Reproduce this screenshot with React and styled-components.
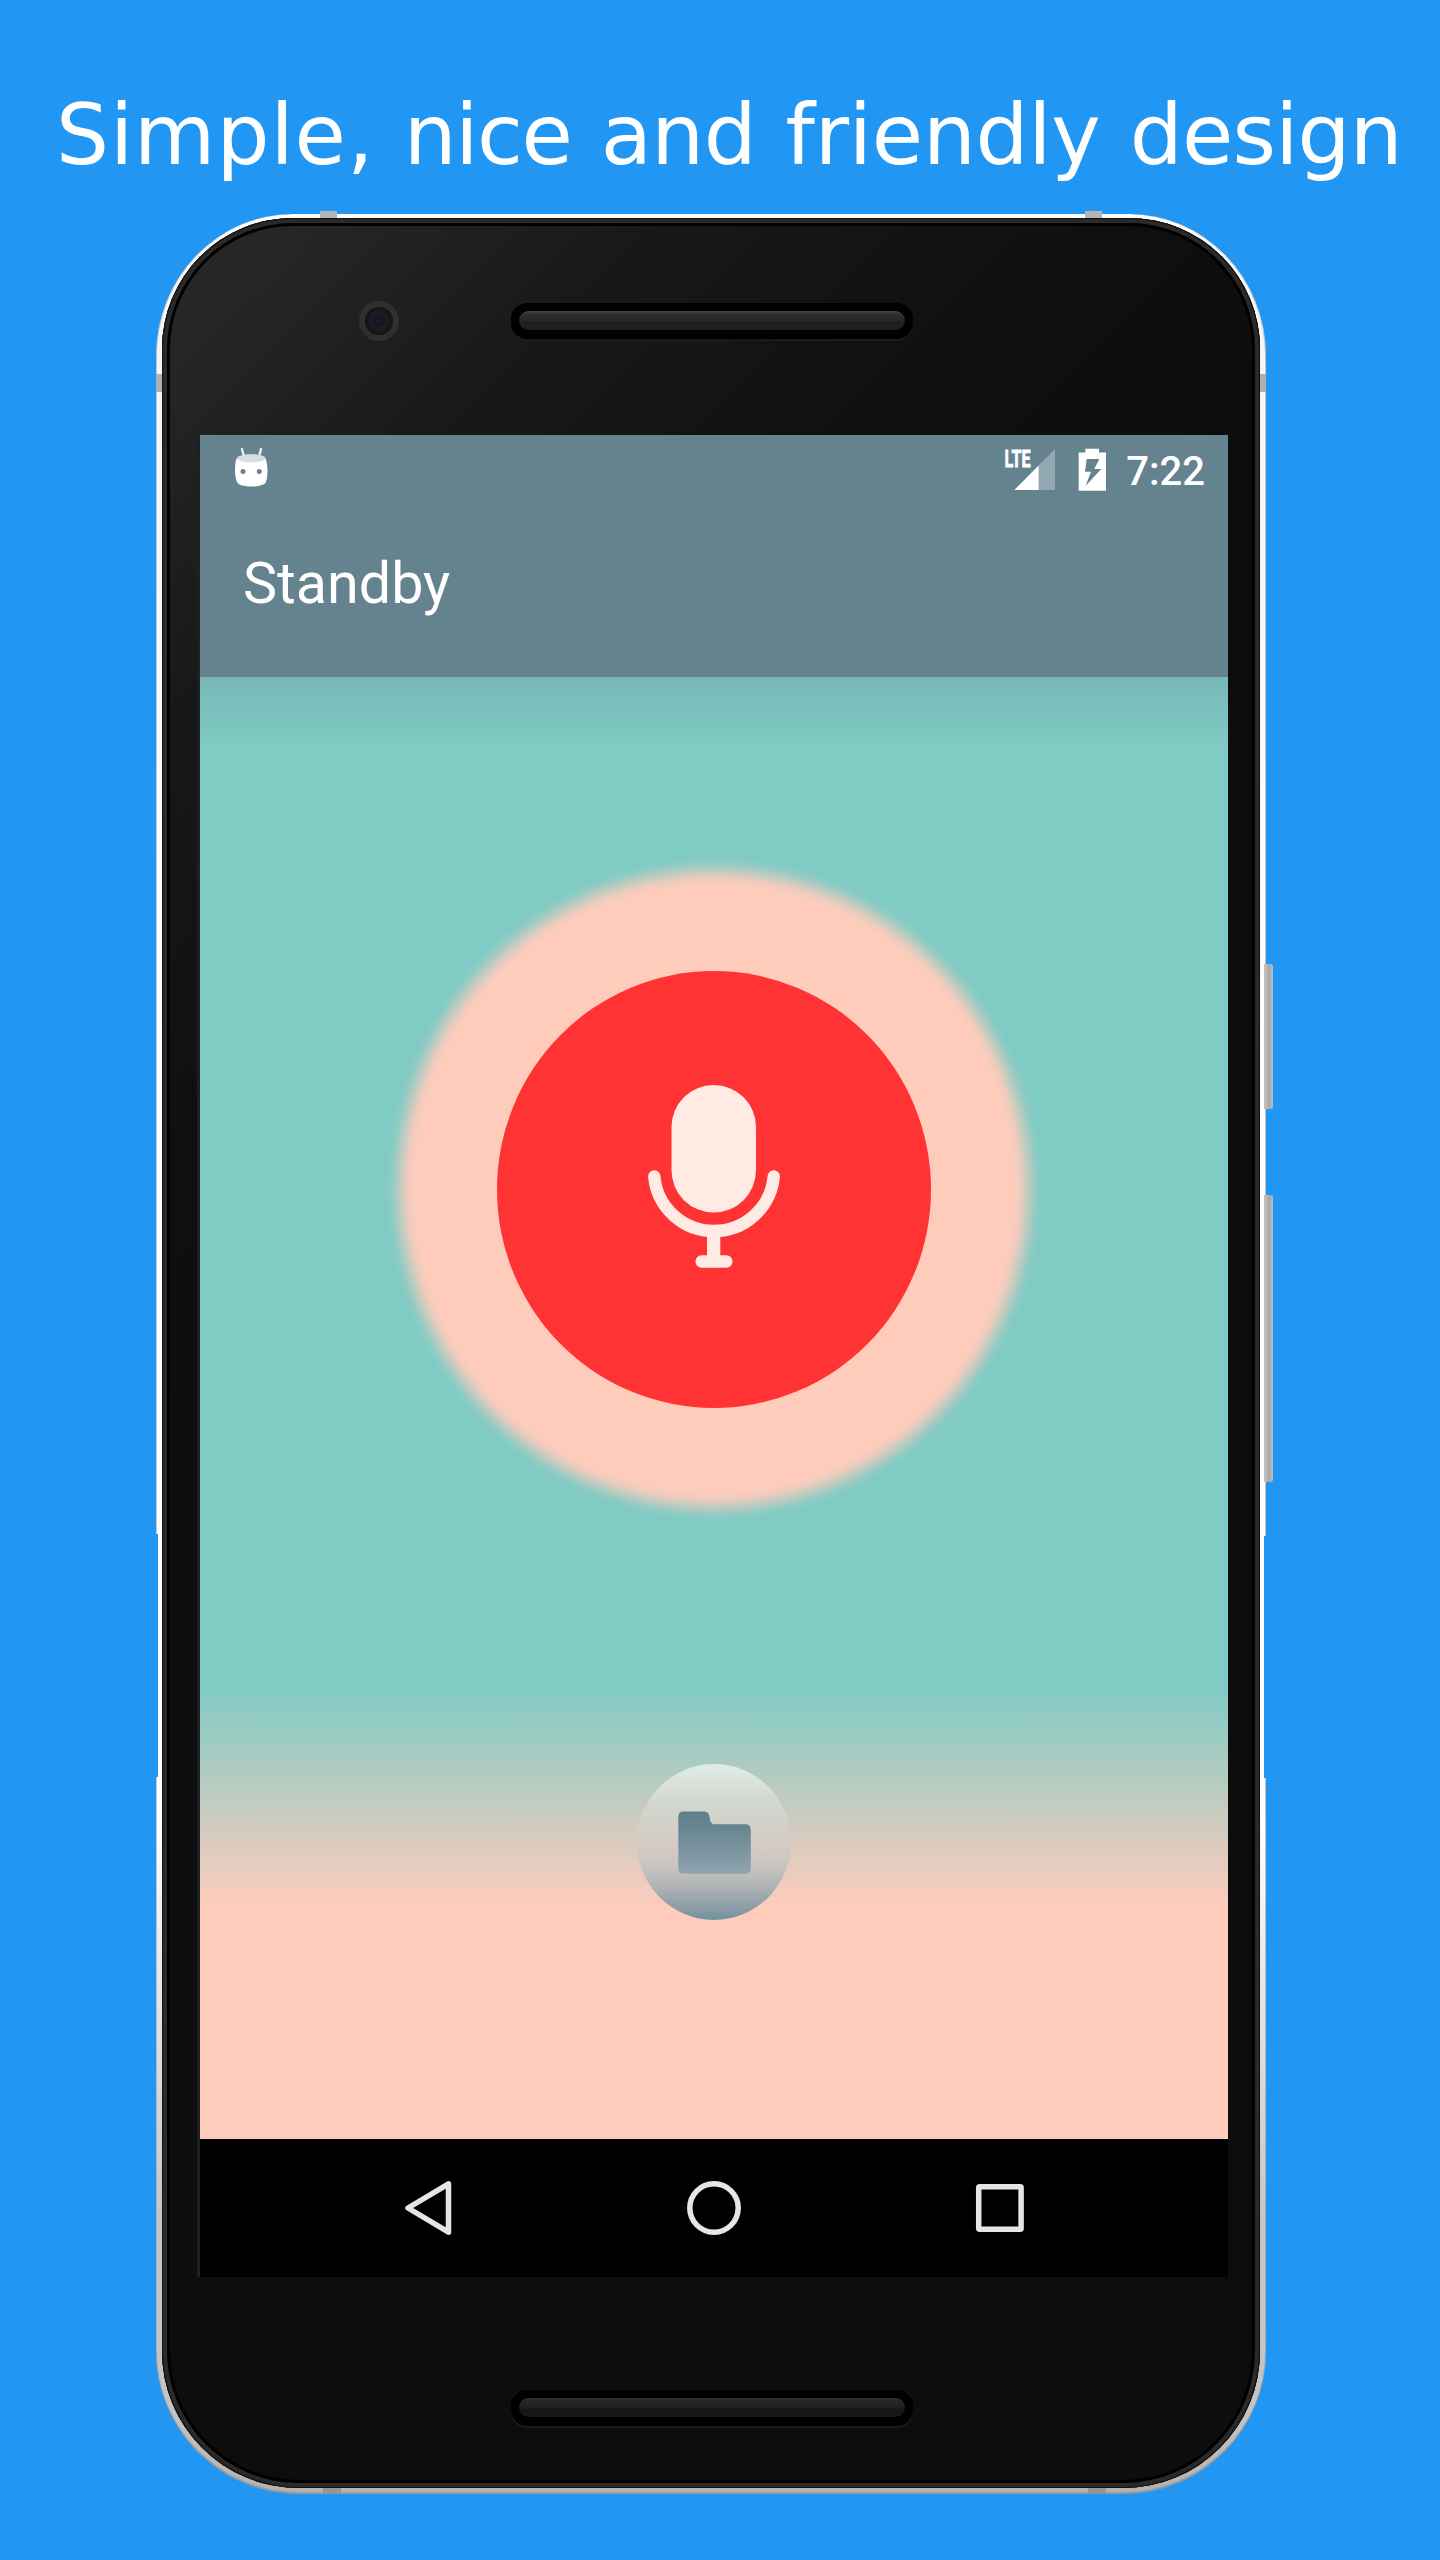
import React from "react";
import styled, { createGlobalStyle } from "styled-components";

const GlobalStyle = createGlobalStyle`
  * { box-sizing: border-box; }
  body { margin: 0; background: #2196f3; }
`;

const Page = styled.main`
  width: 1440px;
  height: 2560px;
  overflow: hidden;
  background: #2196f3;
  display: flex;
  flex-direction: column;
`;

const Title = styled.h1`
  margin: 0;
  height: 214px;
  padding: 86px 0 0 56px;
  font: 400 83.5px/98px "DejaVu Sans", Verdana, sans-serif;
  word-spacing: 0.034em;
  color: #fff;
  white-space: nowrap;
`;

const Word = styled.span`
  letter-spacing: ${(p) => p.$track}em;
`;

const Frame = styled.section`
  position: relative;
  margin-left: 156px;
  width: 1110px;
  height: 2280px;
  padding: 4px 6px 6px 6px;
  border-radius: 137px 137px 143px 143px / 142px 142px 143px 143px;
  box-shadow: inset 1px 0 0 rgba(150, 150, 150, 0.5), inset -1px 0 0 rgba(150, 150, 150, 0.5), inset 0 -2px 0 rgba(120, 120, 120, 0.4);
  background: linear-gradient(180deg, #fff 0, #f4f4f4 150px, #fff 900px, #fff 1600px, #c6c6c6 2000px, #c4c4c4 2200px, #b2b2b2 2280px);
`;

const FrameEdge = styled.span`
  position: absolute;
  top: ${(p) => p.$top}px;
  left: ${(p) => p.$left}px;
  width: ${(p) => p.$width}px;
  height: ${(p) => p.$height}px;
  background: ${(p) => p.$fill};
`;

const SideButton = styled.span`
  position: absolute;
  left: 1108px;
  top: ${(p) => p.$top}px;
  width: 9px;
  height: ${(p) => p.$height}px;
  border-radius: 0 3px 3px 0;
  background: linear-gradient(90deg, #c4c4c4, #a9a9a9 60%, #bdbdbd);
  &::before {
    content: "";
    position: absolute;
    left: 0;
    top: -28px;
    width: 4px;
    height: ${(p) => p.$height + 56}px;
    background: #c0c0c0;
    clip-path: polygon(40% 0, 100% 28px, 100% calc(100% - 28px), 40% 100%, 0 100%, 0 0);
    z-index: -1;
  }
`;

const Body = styled.div`
  position: relative;
  height: 100%;
  border-radius: 131px 131px 137px 137px;
  display: flex;
  flex-direction: column;
  box-shadow: inset 0 0 0 1px #101010, inset 0 0 0 5px #2a2a2a, inset 0 0 0 8px #000;
  background: linear-gradient(135deg, #292929 0, #262626 100px, #181818 360px, #0f0f0f 680px, #0d0d0d 900px);
`;

const TopBezel = styled.div`
  height: 217px;
  padding: 83px 0 94px 197px;
  display: flex;
  align-items: center;
  gap: 112px;
`;

const BottomBezel = styled.div`
  padding: 113px 0 0 349px;
`;

const Camera = styled.div`
  width: 40px;
  height: 40px;
  border: 6px solid #2f2f2f;
  border-radius: 50%;
  background: radial-gradient(circle, #221c31 0, #17141f 4px, #1e1b24 8px, #121116 14px);
`;

const Speaker = styled.div`
  width: 402px;
  height: 36px;
  padding: 8px;
  border-radius: 16px;
  background: #000;
  box-shadow: 0 2px 0 #1b1b1b;
  &::before {
    content: "";
    display: block;
    height: 19px;
    border-radius: 10px;
    background: ${(p) =>
      p.$dim
        ? "linear-gradient(#333 0, #232323 4px, #1f1f1f 10px, #171717 11px, #171717)"
        : "linear-gradient(#444 0, #2c2c2c 4px, #282828 10px, #1f1f1f 11px, #1f1f1f)"};
  }
`;

const Screen = styled.div`
  margin-left: 38px;
  width: 1028px;
  height: 1842px;
  flex: none;
  display: flex;
  flex-direction: column;
  box-shadow: -3px 0 0 #1b2028;
`;

const Header = styled.header`
  height: 242px;
  flex: none;
  background: #64838f;
  color: #fff;
  font-family: Roboto, sans-serif;
`;

const StatusBar = styled.div`
  height: 72px;
  padding: 0 23px 0 34px;
  display: flex;
  align-items: center;
`;

const Clock = styled.span`
  margin: 2px 0 0 20px;
  font-size: 40px;
  font-weight: 500;
  line-height: 48px;
`;

const StatusIcons = styled.div`
  margin: -4px 0 0 auto;
  display: flex;
  align-items: center;
  gap: 23px;
`;

const Notification = styled.div`
  height: 42px;
  margin-top: -9px;
`;

const Heading = styled.h2`
  margin: 0;
  padding: 41px 0 0 43px;
  font-size: 57.4px;
  font-weight: 400;
  line-height: 72px;
`;

const Content = styled.div`
  height: 1462px;
  padding-top: 179px;
  display: flex;
  flex-direction: column;
  align-items: center;
  gap: 242px;
  background:
    linear-gradient(rgba(95, 125, 138, 0.25), rgba(95, 125, 138, 0) 74px) no-repeat,
    linear-gradient(#80cbc4 1011px, #ffccbc 1232px);
`;

const Glow = styled.div`
  width: 658px;
  height: 666px;
  flex: none;
  display: grid;
  place-items: center;
  background: radial-gradient(closest-side, #ffccbc 90.5%, #f0ccbd 93%, #8fcbc3 98%, #80cbc4 100%);
`;

const RecordButton = styled.button`
  width: 434px;
  height: 437px;
  padding: 0 0 24px;
  border: 0;
  border-radius: 50%;
  background: #ff3333;
  display: grid;
  place-items: center;
`;

const FolderButton = styled.button`
  width: 154px;
  height: 156px;
  flex: none;
  padding: 2px 0 0 0;
  border: 0;
  border-radius: 50%;
  display: grid;
  place-items: center;
  background: linear-gradient(#dfece6 0, #d3d9d1 35px, #d2cfc7 65px, #d4cac5 84px, #c8c3c0 104px, #adb2b4 124px, #8c9da6 143px, #7093a0 156px);
`;

const NavBar = styled.nav`
  height: 138px;
  flex: none;
  padding: 0 203px;
  background: #000;
  display: flex;
  align-items: center;
  justify-content: space-between;
`;

const NavIcon = styled.svg`
  width: 54px;
  height: 60px;
  fill: none;
  stroke: #e6e6e6;
  stroke-width: 5.5;
  stroke-linejoin: round;
`;

const AndroidIcon = () => (
  <svg width="34" height="42" viewBox="0 0 34 42">
    <path d="M8 3l2.3 9M27 3l-2.3 9" stroke="#fff" strokeWidth="2.4" strokeLinecap="round" opacity=".85" />
    <path d="M2 13.5C5 7 29 7 32 13.5C34 22 34 29 32 36C30 42 5 42 3 36C.5 29 .5 22 2 13.5Z" fill="#fff" />
    <ellipse cx="17.3" cy="12.3" rx="14.2" ry="4" fill="#d6dfe2" />
    <circle cx="9" cy="25.5" r="2.5" fill="#64838f" />
    <circle cx="25.3" cy="25.5" r="2.5" fill="#64838f" />
  </svg>
);

const SignalIcon = () => (
  <svg width="51" height="60" viewBox="0 -8 51 60">
    <path d="M51 2V43H34.700V18.300Z" fill="#fff" opacity=".3" />
    <path d="M10.300 43L34.700 18.600V43Z" fill="#fff" />
    <text x="0.500" y="20" textLength="26" lengthAdjust="spacingAndGlyphs" fontFamily="Roboto, sans-serif" fontSize="24.500" fontWeight="700" fill="#fff" stroke="#fff" strokeWidth=".8">LTE</text>
  </svg>
);

const BatteryIcon = () => (
  <svg width="28" height="44" viewBox="0 0 28 44">
    <path fillRule="evenodd" fill="#fff" d="M7.300 1.800H21V5.500H28V43.700H.7V5.500H7.300ZM8.700 12L7 24.800H13L7.500 39L23.300 22H16.300L21.300 12Z" />
  </svg>
);

const MicIcon = () => (
  <svg width="134" height="184" viewBox="0 0 134 184">
    <g fill="#ffebe3">
      <rect x="24.500" y="0" width="84.500" height="127.500" rx="42.200" />
      <rect x="60" y="144" width="13.300" height="32" />
      <rect x="48.500" y="170.300" width="37" height="12.500" rx="6" />
    </g>
    <path d="M7.250 91.500A60 60 0 0 0 126.750 91.500" fill="none" stroke="#ffebe3" strokeWidth="12.400" strokeLinecap="round" />
  </svg>
);

const FolderIcon = () => (
  <svg width="73" height="64" viewBox="0 0 73 64">
    <defs>
      <linearGradient id="folder" x1="0" y1="0" x2="0" y2="1">
        <stop offset="0" stopColor="#607d8b" />
        <stop offset=".25" stopColor="#68858f" />
        <stop offset="1" stopColor="#90a4b1" />
      </linearGradient>
    </defs>
    <path d="M5.500.5H26Q31.500.5 31.800 7.500Q32.500 12.500 36 13.300H67.500Q72.800 13.300 72.800 19V57Q72.800 62.800 67.500 62.800H5.500Q.3 62.800.3 57V6Q.3.5 5.500.5Z" fill="url(#folder)" />
  </svg>
);

export default function App() {
  return (
    <>
      <GlobalStyle />
      <Page>
        <Title>
          <Word $track={0.0115}>Simple,</Word> <Word $track={-0.0175}>nice</Word>{" "}
          <Word $track={-0.0065}>and</Word> <Word $track={-0.003}>friendly</Word>{" "}
          <Word $track={-0.01}>design</Word>
        </Title>
        <Frame>
          <SideButton $top={750} $height={145} />
          <SideButton $top={981} $height={287} />
          <FrameEdge $top={-3} $left={164} $width={17} $height={7} $fill="#b5b5b5" />
          <FrameEdge $top={-3} $left={929} $width={17} $height={7} $fill="#b5b5b5" />
          <FrameEdge $top={160} $left={0} $width={6} $height={18} $fill="#b0b0b0" />
          <FrameEdge $top={160} $left={1104} $width={6} $height={18} $fill="#b0b0b0" />
          <FrameEdge $top={2274} $left={167} $width={18} $height={6} $fill="#959595" />
          <FrameEdge $top={2274} $left={932} $width={18} $height={6} $fill="#959595" />
          <FrameEdge $top={1320} $left={0} $width={2} $height={243} $fill="#2196f3" />
          <FrameEdge $top={1322} $left={1108} $width={2} $height={242} $fill="#2196f3" />
          <Body>
            <TopBezel>
              <Camera />
              <Speaker />
            </TopBezel>
            <Screen>
              <Header>
                <StatusBar>
                  <Notification>
                    <AndroidIcon />
                  </Notification>
                  <StatusIcons>
                    <SignalIcon />
                    <BatteryIcon />
                  </StatusIcons>
                  <Clock>7:22</Clock>
                </StatusBar>
                <Heading>Standby</Heading>
              </Header>
              <Content>
                <Glow>
                  <RecordButton aria-label="Record">
                    <MicIcon />
                  </RecordButton>
                </Glow>
                <FolderButton aria-label="Recordings">
                  <FolderIcon />
                </FolderButton>
              </Content>
              <NavBar>
                <NavIcon viewBox="0 0 54 60">
                  <path d="M5 30L45.500 5.800V54.200Z" />
                </NavIcon>
                <NavIcon viewBox="0 0 54 60">
                  <circle cx="27" cy="30" r="24.200" />
                </NavIcon>
                <NavIcon viewBox="0 0 54 60">
                  <rect x="7.700" y="8.700" width="42.400" height="42.500" rx="1" />
                </NavIcon>
              </NavBar>
            </Screen>
            <BottomBezel>
              <Speaker $dim />
            </BottomBezel>
          </Body>
        </Frame>
      </Page>
    </>
  );
}
